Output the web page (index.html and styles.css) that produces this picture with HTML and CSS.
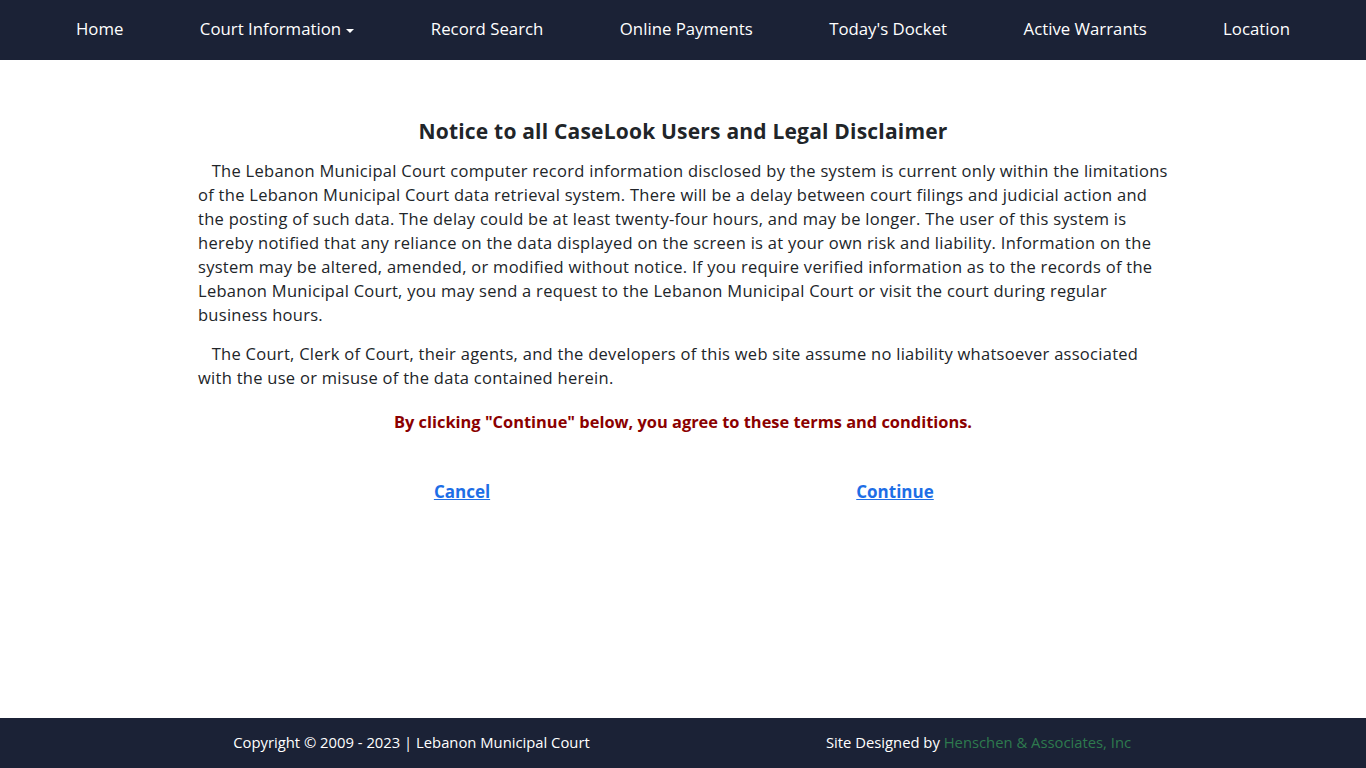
FILE: index.html
```html
<!DOCTYPE html>
<html>
<head>
    <title>CaseLook - Lebanon Municipal Court</title>
    <link rel="stylesheet" href="styles.css">
</head>
<body>
    <nav class="topnav">
        <div class="nav-inner">
            <a href="#" class="nav-link">Home</a>
            <a href="#" class="nav-link">Court Information <span class="caret"></span></a>
            <a href="#" class="nav-link">Record Search</a>
            <a href="#" class="nav-link">Online Payments</a>
            <a href="#" class="nav-link">Today's Docket</a>
            <a href="#" class="nav-link">Active Warrants</a>
            <a href="#" class="nav-link">Location</a>
        </div>
    </nav>

    <main class="content">
        <h1 class="title">Notice to all CaseLook Users and Legal Disclaimer</h1>
        <p class="notice">&nbsp;&nbsp;&nbsp;The Lebanon Municipal Court computer record information disclosed by the system is current only within the limitations of the Lebanon Municipal Court data retrieval system. There will be a delay between court filings and judicial action and the posting of such data. The delay could be at least twenty-four hours, and may be longer. The user of this system is hereby notified that any reliance on the data displayed on the screen is at your own risk and liability. Information on the system may be altered, amended, or modified without notice. If you require verified information as to the records of the Lebanon Municipal Court, you may send a request to the Lebanon Municipal Court or visit the court during regular business hours.</p>
        <p class="notice">&nbsp;&nbsp;&nbsp;The Court, Clerk of Court, their agents, and the developers of this web site assume no liability whatsoever associated with the use or misuse of the data contained herein.</p>
        <p class="agree">By clicking "Continue" below, you agree to these terms and conditions.</p>
        <div class="actions">
            <a href="#" class="action-link">Cancel</a>
            <a href="#" class="action-link">Continue</a>
        </div>
    </main>

    <footer class="footer">
        <div class="footer-inner">
            <div class="footer-col">Copyright &copy; 2009 - 2023 | Lebanon Municipal Court</div>
            <div class="footer-col">Site Designed by <a href="#" class="designer">Henschen &amp; Associates, Inc</a></div>
        </div>
    </footer>
</body>
</html>
```

FILE: styles.css
```css
html, body {
    height: 100%;
}
body {
    margin: 0;
    display: flex;
    flex-direction: column;
    font-family: "Open Sans", "Liberation Sans", sans-serif;
    color: #212529;
    background: #fff;
}
.topnav {
    background: #1b2236;
    height: 60px;
    flex-shrink: 0;
}
.nav-inner {
    width: 1214px;
    margin: 0 auto;
    height: 60px;
    display: flex;
    justify-content: space-between;
    align-items: center;
}
.nav-link {
    color: #fff;
    text-decoration: none;
    font-size: 16.8px;
    line-height: 20px;
    padding-bottom: 2px;
}
.caret {
    display: inline-block;
    width: 0;
    height: 0;
    border-left: 4px solid transparent;
    border-right: 4px solid transparent;
    border-top: 4px solid #fff;
    vertical-align: middle;
    margin-left: 1px;
}
.content {
    flex: 1;
    width: 970px;
    margin: 0 auto;
    padding-top: 56px;
}
.title {
    font-size: 21px;
    letter-spacing: 0.2px;
    font-weight: 700;
    text-align: center;
    margin: 0 0 13px;
    line-height: 30px;
}
.notice {
    font-size: 16.5px;
    letter-spacing: 0.28px;
    line-height: 24px;
    margin: 0 0 15px;
}
.agree {
    color: #8b0000;
    font-weight: 700;
    font-size: 16.4px;
    text-align: center;
    margin: 20px 0 0;
}
.actions {
    display: grid;
    grid-template-columns: 433px 433px;
    justify-content: center;
    margin: 47px 9px 0 0;
    text-align: center;
}
.action-link {
    color: #1d6ee6;
    font-weight: 700;
    font-size: 17px;
    text-decoration: underline;
}
.footer {
    background: #1b2236;
    height: 50px;
    flex-shrink: 0;
}
.footer-inner {
    width: 1134px;
    margin-left: 128px;
    height: 50px;
    padding-bottom: 2px;
    box-sizing: border-box;
    display: grid;
    grid-template-columns: 1fr 1fr;
    align-items: center;
    text-align: center;
    color: #fff;
    font-size: 14.8px;
}
.designer {
    color: #2e7a4e;
    text-decoration: none;
}
```
